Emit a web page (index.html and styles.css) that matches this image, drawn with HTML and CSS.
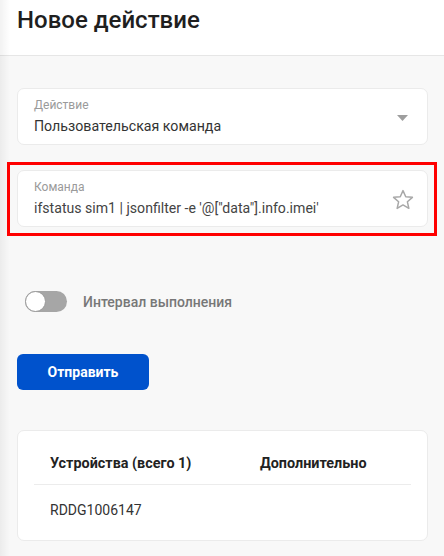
FILE: index.html
```html
<!DOCTYPE html>
<html lang="ru">
<head>
<meta charset="utf-8">
<title>Новое действие</title>
<link rel="stylesheet" href="styles.css">
</head>
<body>
<div class="edge-shadow"></div>
<header class="header">
  <h1 class="title">Новое действие</h1>
</header>
<main class="content">
  <div class="field">
    <div class="field-body">
      <div class="field-label">Действие</div>
      <div class="field-value">Пользовательская команда</div>
    </div>
    <svg class="caret" width="12" height="6" viewBox="0 0 12 6"><path d="M0 0h11L5.5 6z" fill="#9e9e9e"/></svg>
  </div>

  <div class="field field-cmd">
    <div class="field-body">
      <div class="field-label">Команда</div>
      <div class="field-value cmd">ifstatus sim1 | jsonfilter -e '@["data"].info.imei'</div>
    </div>
    <svg class="star" width="24" height="24" viewBox="0 0 24 24"><path d="M12 2.6l2.75 6.1 6.65.65-5 4.45 1.45 6.55L12 16.95 6.15 20.35 7.6 13.8l-5-4.45 6.65-.65z" fill="none" stroke="#a8a8a8" stroke-width="1.5" stroke-linejoin="round"/></svg>
  </div>

  <div class="toggle-row">
    <span class="toggle"><span class="knob"></span></span>
    <span class="toggle-label">Интервал выполнения</span>
  </div>

  <button class="btn">Отправить</button>

  <div class="table-card">
    <div class="trow thead">
      <div class="c1">Устройства (всего 1)</div>
      <div class="c2">Дополнительно</div>
    </div>
    <div class="trow tbody">
      <div class="c1">RDDG1006147</div>
      <div class="c2"></div>
    </div>
  </div>
</main>
</body>
</html>
```
FILE: styles.css
```css
html, body {
  margin: 0;
  padding: 0;
}
body {
  background: #f8f8f8;
  font-family: Roboto, "Noto Sans", Arial, sans-serif;
  color: #333;
  width: 444px;
  min-height: 556px;
  position: relative;
}
.edge-shadow {
  position: absolute;
  left: 0;
  top: 0;
  width: 10px;
  height: 556px;
  background: linear-gradient(to right, rgba(0,0,0,0.05), rgba(0,0,0,0));
  pointer-events: none;
}
.header {
  background: #fff;
  height: 56px;
  border-bottom: 1px solid #e6e6e6;
  box-sizing: border-box;
  padding-left: 17px;
  display: flex;
  align-items: center;
}
.title {
  margin: 0;
  font-size: 24px;
  font-weight: 500;
  color: #1f1f1f;
  position: relative;
  top: -8px;
}
.content {
  padding: 32px 16px 0 17px;
  display: flex;
  flex-direction: column;
  align-items: flex-start;
}
.field {
  width: 411px;
  height: 57px;
  box-sizing: border-box;
  background: #fff;
  border: 1px solid #ebebeb;
  border-radius: 7px;
  display: flex;
  align-items: center;
  padding: 0 18px 0 16px;
  position: relative;
}
.field-body {
  flex: 1;
  display: flex;
  flex-direction: column;
}
.field-label {
  font-size: 12px;
  line-height: 14px;
  color: #9a9a9a;
  margin-bottom: 6px;
}
.field-value {
  font-size: 14.2px;
  line-height: 17px;
  color: #333;
}
.cmd {
  color: #444;
  font-size: 14.1px;
}
.caret {
  margin-top: 2px;
}
.field-cmd {
  margin-top: 25px;
  padding-right: 12px;
}
.field-cmd::after {
  content: "";
  position: absolute;
  left: -11px;
  top: -9px;
  right: -10px;
  bottom: -10px;
  border: 3px solid #ff0000;
  pointer-events: none;
}
.star {
  margin-top: 2px;
}
.toggle-row {
  margin-top: 64px;
  margin-left: 8px;
  display: flex;
  align-items: center;
  gap: 16px;
}
.toggle {
  width: 42px;
  height: 21px;
  border-radius: 11px;
  background: #a6a6a6;
  position: relative;
  display: block;
}
.knob {
  position: absolute;
  left: 0;
  top: 0;
  width: 21px;
  height: 21px;
  box-sizing: border-box;
  border-radius: 50%;
  background: #fff;
  border: 1px solid #9a9a9a;
}
.toggle-label {
  font-size: 14px;
  font-weight: 500;
  color: #777;
}
.btn {
  margin-top: 42px;
  width: 132px;
  height: 36px;
  border: 0;
  border-radius: 6px;
  background: #0052cc;
  color: #fff;
  font-family: Roboto, "Noto Sans", Arial, sans-serif;
  font-size: 14px;
  font-weight: 700;
  padding: 0;
}
.table-card {
  margin-top: 40px;
  width: 411px;
  height: 111px;
  box-sizing: border-box;
  background: #fff;
  border: 1px solid #ebebeb;
  border-radius: 7px;
  padding: 0 16px;
}
.trow {
  display: flex;
  padding-left: 16px;
}
.thead {
  height: 54px;
  align-items: flex-end;
  padding-bottom: 12px;
  box-sizing: border-box;
  border-bottom: 1px solid #ececec;
  font-size: 14.4px;
  font-weight: 700;
  color: #222;
}
.tbody {
  height: 50px;
  align-items: center;
  font-size: 14px;
  color: #333;
}
.c1 {
  width: 210px;
}
```
